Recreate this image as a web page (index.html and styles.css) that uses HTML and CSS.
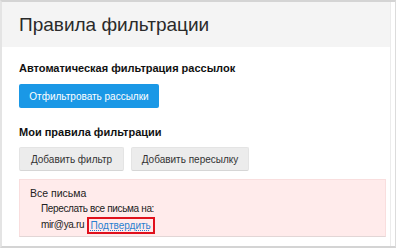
FILE: index.html
```html
<!DOCTYPE html>
<html>
<head>
<meta charset="utf-8">
<link rel="stylesheet" href="styles.css">
</head>
<body>
<div class="card">
  <div class="inner">
    <div class="header"><h1 class="title">Правила фильтрации</h1></div>
    <div class="content">
      <h2 class="section-title">Автоматическая фильтрация рассылок</h2>
      <button class="btn btn-primary">Отфильтровать рассылки</button>
      <h2 class="section-title second">Мои правила фильтрации</h2>
      <div class="btn-row">
        <button class="btn btn-gray">Добавить фильтр</button>
        <button class="btn btn-gray">Добавить пересылку</button>
      </div>
      <div class="rule">
        <div class="rule-name">Все письма</div>
        <div class="rule-body">
          <div>Переслать все письма на:</div>
          <div class="addr">mir@ya.ru <span class="confirm"><a class="link" href="#">Подтвердить</a></span></div>
        </div>
      </div>
    </div>
  </div>
</div>
</body>
</html>
```

FILE: styles.css
```css
html, body {
  margin: 0;
  padding: 0;
  background: #fff;
}
body {
  font-family: "Liberation Sans", Arial, sans-serif;
  color: #222;
  width: 401px;
  height: 250px;
  overflow: hidden;
}
.card {
  width: 393px;
  height: 244px;
  border-top: 2px solid #d4d4d4;
  border-left: 2px solid #e4e4e4;
  border-right: 1px solid #dcdcdc;
  border-bottom: 2px solid #d4d4d4;
}
.inner {
  width: 388px;
  height: 100%;
  border-right: 1px solid #ececec;
}
.header {
  background: #f4f4f4;
  height: 45px;
  display: flex;
  align-items: center;
  padding-left: 17px;
}
.title {
  margin: 0;
  font-weight: normal;
  font-size: 19px;
  color: #2a2a2a;
}
.content {
  padding: 15px 0 0 17px;
}
.section-title {
  margin: 0;
  font-size: 11px;
  font-weight: bold;
  color: #111;
  line-height: 13px;
}
.section-title.second {
  margin-top: 18px;
}
.btn {
  font-family: "Liberation Sans", Arial, sans-serif;
  font-size: 10px;
  border: none;
  border-radius: 2px;
  height: 24px;
  padding: 0;
  cursor: pointer;
}
.btn-primary {
  margin-top: 9px;
  background: #1a98e6;
  color: #fff;
  width: 140px;
}
.btn-row {
  display: flex;
  gap: 7px;
  margin-top: 8px;
}
.btn-gray {
  background: #ececec;
  color: #333;
  border: 1px solid #e4e4e4;
  border-bottom-color: #d6d6d6;
}
.btn-gray:first-child { width: 105px; }
.btn-gray:last-child { width: 118px; }
.rule {
  margin-top: 8px;
  width: 367px;
  background: #ffebeb;
  border: 1px solid #f9dede;
  border-bottom: 1px solid #e2d6d6;
  padding: 5px 0 2px 10px;
  box-sizing: border-box;
  font-size: 10px;
  color: #222;
  line-height: 16px;
}
.rule-name {
  font-size: 10.5px;
}
.rule-body {
  padding-left: 11px;
  letter-spacing: -0.35px;
}
.addr {
  line-height: 17px;
  margin-top: -1px;
}
.confirm {
  display: inline-block;
  border: 2px solid #e0101c;
  padding: 0 2px;
  line-height: 13px;
  vertical-align: middle;
  letter-spacing: 0;
}
.link {
  color: #2a7fd0;
  text-decoration: underline dotted;
}
```
